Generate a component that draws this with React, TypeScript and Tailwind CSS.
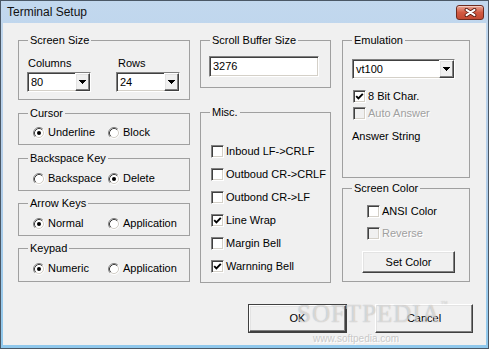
import { useId, type ReactNode } from "react";

const font = "font-['Liberation_Sans',Arial,sans-serif]";

const sunken =
  "border border-t-[#808080] border-l-[#808080] border-r-white border-b-white shadow-[inset_1px_1px_0_#404040,inset_-1px_-1px_0_#d4d0c8]";

const raised =
  "border border-t-white border-l-white border-r-[#404040] border-b-[#404040] shadow-[inset_-1px_-1px_0_#808080,inset_1px_1px_0_#e3e3e3] bg-[#f0f0f0]";

function Group({
  title,
  className,
  children,
}: {
  title: string;
  className?: string;
  children?: ReactNode;
}) {
  return (
    <fieldset className={`border border-[#a0a0a0] ${className ?? ""}`}>
      <legend className="ml-[9px] px-[2px] leading-[13px]">{title}</legend>
      {children}
    </fieldset>
  );
}

function Radio({ label, checked, className }: { label: string; checked?: boolean; className?: string }) {
  return (
    <div className={`flex h-[13px] items-center gap-[3px] ${className ?? ""}`}>
      <svg width="12" height="12" viewBox="0 0 12 12" className="shrink-0">
        <circle cx="6" cy="6" r="4.5" fill="#fff" />
        <path d="M2.11 9.89 A5.5 5.5 0 0 1 9.89 2.11" fill="none" stroke="#808080" />
        <path d="M9.89 2.11 A5.5 5.5 0 0 1 2.11 9.89" fill="none" stroke="#fff" />
        <path d="M2.82 9.18 A4.5 4.5 0 0 1 9.18 2.82" fill="none" stroke="#404040" />
        <path d="M9.18 2.82 A4.5 4.5 0 0 1 2.82 9.18" fill="none" stroke="#d4d0c8" />
        {checked && <circle cx="6" cy="6" r="2" fill="#000" />}
      </svg>
      <span>{label}</span>
    </div>
  );
}

function Check({
  label,
  checked,
  disabled,
  className,
}: {
  label: string;
  checked?: boolean;
  disabled?: boolean;
  className?: string;
}) {
  return (
    <div className={`flex h-[13px] items-center gap-[2px] ${className ?? ""}`}>
      <span
        className={`flex h-[13px] w-[13px] shrink-0 items-center justify-center ${sunken} ${
          disabled ? "bg-[#f0f0f0]" : "bg-white"
        }`}
      >
        {checked && (
          <svg width="9" height="9" viewBox="0 0 9 9">
            <path d="M1.2 4.2 L3.4 6.4 L7.8 1.8" fill="none" stroke="#000" strokeWidth="1.9" />
          </svg>
        )}
      </span>
      <span className={disabled ? "text-[#a0a0a0] [text-shadow:1px_1px_0_#fff]" : ""}>{label}</span>
    </div>
  );
}

function Combo({ value, className }: { value: string; className: string }) {
  return (
    <div className={`flex bg-white ${sunken} ${className}`}>
      <span className="flex flex-1 items-center pl-[3px]">{value}</span>
      <span className={`flex w-[15px] items-center justify-center ${raised}`}>
        <svg width="7" height="4" viewBox="0 0 7 4" shapeRendering="crispEdges">
          <path d="M0 0 H7 L3.5 4 Z" fill="#000" />
        </svg>
      </span>
    </div>
  );
}

function Button({ label, className, isDefault }: { label: string; className: string; isDefault?: boolean }) {
  if (isDefault) {
    return (
      <div className={`border border-[#404040] ${className}`}>
        <div className={`flex h-full w-full items-center justify-center ${raised}`}>{label}</div>
      </div>
    );
  }
  return <div className={`flex items-center justify-center ${raised} ${className}`}>{label}</div>;
}

function CloseButton() {
  const id = useId();
  return (
    <div className="flex h-[15px] w-[28px] items-center justify-center rounded-[3px] border border-[#6e2a1e] bg-gradient-to-b from-[#e8a493] via-[#d25a42] to-[#c24a33] shadow-[inset_0_1px_0_rgba(255,255,255,0.45)]">
      <svg width="13" height="9" viewBox="0 0 13 9" aria-labelledby={id}>
        <title id={id}>Close</title>
        <path d="M2.5 1.8 L10.5 7.2 M10.5 1.8 L2.5 7.2" stroke="#5a1c12" strokeWidth="3.8" strokeLinecap="round" />
        <path d="M2.5 1.8 L10.5 7.2 M10.5 1.8 L2.5 7.2" stroke="#fff" strokeWidth="2" strokeLinecap="round" />
      </svg>
    </div>
  );
}

export default function App() {
  return (
    <div
      className={`flex h-[349px] w-[489px] flex-col border border-[#4b5866] bg-gradient-to-b from-[#c2d8ee] via-[#b3cde8] to-[#8fc8ec] text-[11px] leading-[13px] text-black ${font}`}
    >
      <div className="flex h-[22px] shrink-0 items-center justify-between pl-[6px] pr-[4px]">
        <span className="text-[12px] text-[#111]">Terminal Setup</span>
        <CloseButton />
      </div>

      <div className="relative mx-[2px] mb-[3px] flex flex-1 flex-col bg-[#f0f0f0] pl-[15px] pr-[13px] pt-[11px]">
        <div className="flex">
          <div className="flex w-[172px] flex-col">
            <Group title="Screen Size" className="h-[66px]">
              <div className="flex pl-[8px] pt-[10px]">
                <div className="w-[89px]">
                  <div className="pl-[1px]">Columns</div>
                  <Combo value="80" className="mt-[2px] h-[20px] w-[64px]" />
                </div>
                <div>
                  <div className="pl-[2px]">Rows</div>
                  <Combo value="24" className="mt-[2px] h-[20px] w-[64px]" />
                </div>
              </div>
            </Group>

            <Group title="Cursor" className="mt-[7px] h-[38px]">
              <div className="flex pl-[14px] pt-[6px]">
                <Radio label="Underline" checked className="w-[75px]" />
                <Radio label="Block" />
              </div>
            </Group>

            <Group title="Backspace Key" className="mt-[7px] h-[39px]">
              <div className="flex pl-[14px] pt-[7px]">
                <Radio label="Backspace" className="w-[75px]" />
                <Radio label="Delete" checked />
              </div>
            </Group>

            <Group title="Arrow Keys" className="mt-[6px] h-[39px]">
              <div className="flex pl-[14px] pt-[7px]">
                <Radio label="Normal" checked className="w-[75px]" />
                <Radio label="Application" />
              </div>
            </Group>

            <Group title="Keypad" className="mt-[6px] h-[40px]">
              <div className="flex pl-[14px] pt-[7px]">
                <Radio label="Numeric" checked className="w-[75px]" />
                <Radio label="Application" />
              </div>
            </Group>
          </div>

          <div className="ml-[10px] flex w-[131px] flex-col">
            <Group title="Scroll Buffer Size" className="h-[54px]">
              <div className="pl-[8px] pt-[9px]">
                <div className={`flex h-[21px] w-[110px] items-center bg-white pl-[3px] ${sunken}`}>3276</div>
              </div>
            </Group>

            <Group title="Misc." className="mt-[18px] h-[177px]">
              <div className="flex flex-col gap-[10px] pl-[10px] pt-[26px]">
                <Check label="Inboud LF->CRLF" />
                <Check label="Outboud CR->CRLF" />
                <Check label="Outbond CR->LF" />
                <Check label="Line  Wrap" checked />
                <Check label="Margin Bell" />
                <Check label="Warnning Bell" checked />
              </div>
            </Group>
          </div>

          <div className="ml-[11px] flex w-[128px] flex-col">
            <Group title="Emulation" className="h-[144px]">
              <div className="flex flex-col pl-[9px] pt-[12px]">
                <Combo value="vt100" className="h-[20px] w-[103px]" />
                <Check label="8 Bit Char." checked className="ml-[1px] mt-[11px]" />
                <Check label="Auto Answer" disabled className="ml-[1px] mt-[4px]" />
                <div className="mt-[10px] whitespace-pre">Answer String</div>
              </div>
            </Group>

            <Group title="Screen Color" className="mt-[4px] h-[100px]">
              <div className="flex flex-col pl-[19px] pt-[10px]">
                <Check label="ANSI Color" className="ml-[5px]" />
                <Check label="Reverse" disabled className="ml-[5px] mt-[9px]" />
                <Button label="Set Color" className="mt-[11px] h-[22px] w-[93px]" />
              </div>
            </Group>
          </div>
        </div>

        <div className="mt-[21px] flex justify-end gap-[28px]">
          <Button label="OK" isDefault className="h-[29px] w-[99px]" />
          <Button label="Cancel" className="h-[29px] w-[98px]" />
        </div>

        <div className="pointer-events-none absolute left-[294px] top-[278px] font-['Liberation_Serif',serif] text-[25px] leading-[25px] tracking-[1px] text-white/50 [text-shadow:0_0_1px_rgba(110,110,110,0.55)]">
          SOFTPEDIA<span className="align-top text-[7px] leading-[7px]">™</span>
        </div>
        <div className="pointer-events-none absolute left-[310px] top-[311px] text-[10px] leading-[10px] text-[#c9c9c9] [text-shadow:1px_1px_0_#fff]">
          www.softpedia.com
        </div>
      </div>
    </div>
  );
}
